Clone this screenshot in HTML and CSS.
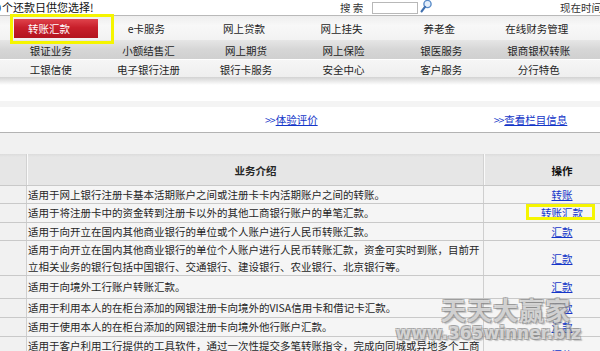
FILE: index.html
```html
<!DOCTYPE html>
<html lang="zh-CN">
<head>
<meta charset="utf-8">
<title>转账汇款</title>
<link rel="stylesheet" href="styles.css">
</head>
<body>
<div class="page">
  <div class="topbar">
    <span class="notice"><span class="cut">0</span>个还款日供您选择!</span>
    <span class="search">
      <span class="search-label">搜 索</span>
      <span class="search-input"></span>
      <svg class="search-icon" width="12" height="14" viewBox="0 0 12 14">
        <circle cx="7.5" cy="5" r="3.6" fill="#e3eefb" stroke="#5b8cc8" stroke-width="1.4"/>
        <line x1="5" y1="7.8" x2="1.6" y2="12.4" stroke="#3f6fae" stroke-width="2.2" stroke-linecap="round"/>
      </svg>
    </span>
    <span class="time">现在时间：</span>
  </div>

  <nav class="nav">
    <div class="nav-row row1">
      <div class="nav-item"><span class="nav-active">转账汇款</span></div>
      <div class="nav-item">e卡服务</div>
      <div class="nav-item">网上贷款</div>
      <div class="nav-item">网上挂失</div>
      <div class="nav-item">养老金</div>
      <div class="nav-item">在线财务管理</div>
    </div>
    <div class="nav-row row2">
      <div class="nav-item">银证业务</div>
      <div class="nav-item">小额结售汇</div>
      <div class="nav-item">网上期货</div>
      <div class="nav-item">网上保险</div>
      <div class="nav-item">银医服务</div>
      <div class="nav-item">银商银权转账</div>
    </div>
    <div class="nav-row row3">
      <div class="nav-item">工银信使</div>
      <div class="nav-item">电子银行注册</div>
      <div class="nav-item">银行卡服务</div>
      <div class="nav-item">安全中心</div>
      <div class="nav-item">客户服务</div>
      <div class="nav-item">分行特色</div>
    </div>
    <div class="mark mark-nav"></div>
  </nav>
  <div class="nav-shadow"></div>
  <div class="spacer"></div>
  <div class="gap-band"></div>

  <div class="links">
    <a class="link" href="#"><span class="arrow">&gt;&gt;</span><u>体验评价</u></a>
    <a class="link" href="#"><span class="arrow">&gt;&gt;</span><u>查看栏目信息</u></a>
  </div>
  <div class="sub-band"></div>

  <div class="biz">
    <div class="biz-row head">
      <div class="c-idx"></div>
      <div class="c-desc">业务介绍</div>
      <div class="c-op">操作</div>
    </div>
    <div class="biz-row short">
      <div class="c-idx"></div>
      <div class="c-desc">适用于网上银行注册卡基本活期账户之间或注册卡卡内活期账户之间的转账。</div>
      <div class="c-op"><a href="#">转账</a></div>
    </div>
    <div class="biz-row">
      <div class="c-idx"></div>
      <div class="c-desc">适用于将注册卡中的资金转到注册卡以外的其他工商银行账户的单笔汇款。</div>
      <div class="c-op"><a href="#">转账汇款</a><span class="mark mark-op"></span></div>
    </div>
    <div class="biz-row short">
      <div class="c-idx"></div>
      <div class="c-desc">适用于向开立在国内其他商业银行的单位或个人账户进行人民币转账汇款。</div>
      <div class="c-op"><a href="#">汇款</a></div>
    </div>
    <div class="biz-row double">
      <div class="c-idx"></div>
      <div class="c-desc">适用于向开立在国内其他商业银行的单位个人账户进行人民币转账汇款，资金可实时到账，目前开立相关业务的银行包括中国银行、交通银行、建设银行、农业银行、北京银行等。</div>
      <div class="c-op"><a href="#">汇款</a></div>
    </div>
    <div class="biz-row padded">
      <div class="c-idx"></div>
      <div class="c-desc">适用于向境外工行账户转账汇款。</div>
      <div class="c-op"><a href="#">汇款</a></div>
    </div>
    <div class="biz-row">
      <div class="c-idx"></div>
      <div class="c-desc">适用于利用本人的在柜台添加的网银注册卡向境外的VISA信用卡和借记卡汇款。</div>
      <div class="c-op"><a href="#">汇款</a></div>
    </div>
    <div class="biz-row">
      <div class="c-idx"></div>
      <div class="c-desc">适用于使用本人的在柜台添加的网银注册卡向境外他行账户汇款。</div>
      <div class="c-op"><a href="#">汇款</a></div>
    </div>
    <div class="biz-row double">
      <div class="c-idx"></div>
      <div class="c-desc">适用于客户利用工行提供的工具软件，通过一次性提交多笔转账指令，完成向同城或异地多个工商银行账户的批量转账汇款。</div>
      <div class="c-op"><a href="#">汇款</a></div>
    </div>
  </div>

  <div class="watermark">
    <div class="wm-cn">天天大赢家</div>
    <div class="wm-en">www.365winner.biz</div>
  </div>
</div>
</body>
</html>
```

FILE: styles.css
```css
html, body {
  margin: 0;
  padding: 0;
  overflow: hidden;
  background: #ffffff;
}

.page {
  position: relative;
  width: 640px;
  height: 351px;
  overflow: hidden;
  font-family: "Noto Sans CJK SC", "Noto Sans", sans-serif;
  font-size: 10.5px;
  color: #222222;
}

/* top bar */
.topbar {
  display: flex;
  align-items: center;
  height: 15px;
  line-height: 15px;
}

.notice {
  width: 340px;
  font-size: 11px;
  color: #111111;
  white-space: nowrap;
}

.cut {
  display: inline-block;
  margin-left: -5px;
  width: 7px;
}

.search {
  display: flex;
  align-items: center;
}

.search-label {
  width: 32px;
  white-space: pre;
  color: #333333;
}

.search-input {
  display: block;
  width: 44px;
  height: 10px;
  border: 1px solid #b8b8b8;
  background: #ffffff;
  margin-right: 2px;
}

.search-icon {
  display: block;
  margin-top: -3px;
}

.time {
  margin-left: 128px;
  white-space: nowrap;
  color: #333333;
}

/* navigation */
.nav {
  position: relative;
  border-top: 1px solid #b9b9b9;
}

.nav-row {
  display: grid;
  grid-template-columns: repeat(6, 97.6px);
  padding-left: 2px;
  color: #1e1e1e;
}

.nav-item {
  display: flex;
  align-items: center;
  justify-content: center;
  white-space: nowrap;
}

.row1 {
  height: 19px;
  padding: 3px 0 2px;
  background: linear-gradient(#eeeeee, #f8f8f8 40%, #f2f2f2);
}

.row1 .nav-item:first-child {
  justify-content: flex-start;
}

.nav-active {
  display: block;
  margin-left: 14px;
  width: 77px;
  height: 19px;
  line-height: 19px;
  padding-left: 14px;
  color: #ffffff;
  background: linear-gradient(#e0434c, #c81f2b 45%, #b3141f);
}

.row2 {
  height: 17px;
  padding-top: 2px;
  background: linear-gradient(#e6e6e6, #d6d6d6 50%, #d0d0d0);
}

.row3 {
  height: 16px;
  padding-top: 1px;
  border-top: 1px solid #ffffff;
  background: linear-gradient(#f6f6f6, #eeeeee);
}

.nav-shadow {
  height: 8px;
  background: linear-gradient(#d2d2d2, #ffffff);
}

.spacer {
  height: 16px;
}

.gap-band {
  height: 6px;
  background: #f4f4f4;
}

/* annotation boxes */
.mark {
  position: absolute;
  border: 3px solid #f5f500;
  box-sizing: border-box;
}

.mark-nav {
  left: 10px;
  top: -2px;
  width: 104px;
  height: 30px;
}

/* links row */
.links {
  display: flex;
  align-items: center;
  gap: 176px;
  height: 25px;
  padding-left: 265px;
  border-bottom: 1px solid #b3b3b3;
}

.link {
  color: #1436c8;
  text-decoration: none;
  white-space: nowrap;
}

.arrow {
  letter-spacing: -1px;
  margin-right: 1px;
}

.sub-band {
  height: 21px;
  background: #f1f1f1;
}

/* business table */
.biz {
  width: 640px;
}

.biz-row {
  display: grid;
  grid-template-columns: 27px 457px 156px;
  border-bottom: 1px solid #c9c9c9;
  background: #f5f5f5;
  line-height: 18px;
}

.c-idx {
  border-right: 1px solid #cfcfcf;
  background: #f1f1f1;
}

.c-desc {
  padding-left: 1px;
  border-right: 1px solid #cfcfcf;
  color: #262626;
}

.c-op {
  position: relative;
  display: flex;
  align-items: center;
  justify-content: center;
}

.c-op a {
  color: #1436c8;
  text-decoration: underline;
}

.head {
  height: 31px;
  background: linear-gradient(#dcdcdc, #e6e6e6 10%, #e6e6e6);
  font-weight: bold;
  color: #111111;
}

.head .c-idx,
.head .c-desc {
  background: transparent;
  border-right: 1px solid #d2d2d2;
  box-shadow: 1px 0 0 #fafafa;
}

.head .c-desc,
.head .c-op {
  display: flex;
  align-items: center;
  justify-content: center;
  padding-top: 2px;
}

.short {
  line-height: 17px;
}

.double {
  line-height: 17px;
}

.padded .c-desc {
  padding-top: 2px;
  padding-bottom: 2px;
}

.mark-op {
  left: 42px;
  top: 0;
  width: 69px;
  height: 16px;
}

/* watermark */
.watermark {
  position: absolute;
  left: 393px;
  top: 296px;
  width: 200px;
  text-align: right;
  font-weight: bold;
  color: rgba(255, 255, 255, 0.6);
  text-shadow:
    1px 1px 0 rgba(140, 140, 140, 0.6),
    -1px -1px 0 rgba(140, 140, 140, 0.6),
    1px -1px 0 rgba(140, 140, 140, 0.6),
    -1px 1px 0 rgba(140, 140, 140, 0.6),
    2px 2px 1px rgba(110, 110, 110, 0.35);
}

.wm-cn {
  font-family: "Noto Sans CJK SC", sans-serif;
  font-size: 25px;
  line-height: 26px;
  letter-spacing: 1px;
  padding-right: 22px;
}

.wm-en {
  font-family: "DejaVu Sans", sans-serif;
  font-size: 17px;
  line-height: 22px;
  padding-right: 12px;
}
```
